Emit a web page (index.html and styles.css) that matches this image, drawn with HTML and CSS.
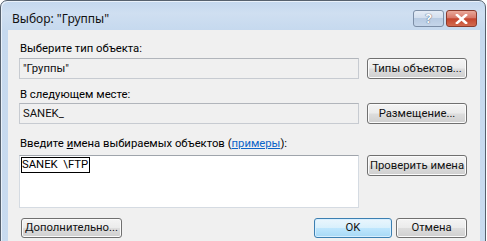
FILE: index.html
```html
<!DOCTYPE html>
<html lang="ru">
<head>
<meta charset="utf-8">
<title>Выбор: "Группы"</title>
<link rel="stylesheet" href="styles.css">
</head>
<body>
<div class="window">
  <div class="titlebar">
    <div class="title">Выбор: "Группы"</div>
    <div class="caption-buttons">
      <div class="cap-btn help">?</div>
      <div class="cap-btn close">
        <svg width="13" height="10" viewBox="0 0 13 10"><path d="M2 1 L11 9 M11 1 L2 9" stroke="#fff" stroke-width="2.6" stroke-linecap="square" fill="none"/></svg>
      </div>
    </div>
  </div>
  <div class="client">
    <div class="label l1">Выберите тип объекта:</div>
    <div class="row">
      <div class="field">"Группы"</div>
      <div class="btn">Типы объектов...</div>
    </div>
    <div class="label l2">В следующем месте:</div>
    <div class="row">
      <div class="field">SANEK_</div>
      <div class="btn">Размещение...</div>
    </div>
    <div class="label l3">Введите <u>и</u>мена выбираемых объектов (<span class="link">примеры</span>):</div>
    <div class="row top">
      <div class="textarea"><span class="entry">SANEK&nbsp;&nbsp;\FTP</span></div>
      <div class="btn">Проверить имена</div>
    </div>
    <div class="bottom">
      <div class="btn adv">Дополнительно...</div>
      <div class="spacer"></div>
      <div class="btn ok default">OK</div>
      <div class="btn cancel">Отмена</div>
    </div>
  </div>
</div>
</body>
</html>
```

FILE: styles.css
```css
html, body {
  margin: 0;
  padding: 0;
  background: #ffffff;
  overflow: hidden;
  width: 487px;
  height: 241px;
}

body {
  font-family: Roboto, "Noto Sans", sans-serif;
  font-size: 11.3px;
  color: #000;
}

.window {
  box-sizing: border-box;
  width: 486px;
  height: 270px;
  border: 1px solid #56616e;
  border-radius: 7px 7px 0 0;
  background: linear-gradient(180deg, #c3d7ee 0px, #cfdff1 12px, #c6d9ee 29px, #c9dbef 100%);
  padding: 0 5px 0 7px;
  display: flex;
  flex-direction: column;
  box-shadow: inset 1px 1px 0 #e9f1fa;
}

.titlebar {
  height: 29px;
  display: flex;
  align-items: flex-start;
  justify-content: space-between;
}

.title {
  padding: 10px 0 0 4px;
  font-family: "Noto Sans", sans-serif;
  font-size: 12px;
  line-height: 15px;
  color: #111;
}

.caption-buttons {
  display: flex;
  gap: 2px;
  padding-top: 9px;
  margin-right: 3px;
}

.cap-btn {
  box-sizing: border-box;
  width: 31px;
  height: 17px;
  border-radius: 3px;
  display: flex;
  align-items: center;
  justify-content: center;
}

.help {
  border: 1px solid #7c8ea6;
  background: linear-gradient(180deg, #e4ecf6 0%, #d3dfee 45%, #b8cbe2 50%, #c5d6ea 100%);
  color: #ffffff;
  font-family: "Noto Sans", sans-serif;
  font-weight: bold;
  font-size: 13px;
  line-height: 15px;
  text-shadow: 0 0 1px #4c5f7a, 0 0 1px #4c5f7a;
}

.close {
  width: 31px;
  border: 1px solid #8a3a2c;
  background: linear-gradient(180deg, #e9a99b 0%, #d8796a 45%, #c4452e 52%, #d26a4f 100%);
}

.client {
  flex: 1;
  background: #f0f0f0;
  padding: 11px 13px 0 11px;
  display: flex;
  flex-direction: column;
}

.label {
  line-height: 15px;
  padding-left: 1px;
  margin-bottom: 2px;
  white-space: nowrap;
}

.l2 { margin-top: 8px; margin-bottom: 1px; }
.l3 { margin-top: 12px; margin-bottom: 4px; }

.link {
  color: #0a64c8;
  text-decoration: underline;
}

.row {
  display: flex;
  gap: 8px;
  align-items: center;
}

.row.top { align-items: flex-start; }

.field {
  box-sizing: border-box;
  flex: 1;
  height: 21px;
  border: 1px solid #c7cbd1;
  border-top-color: #b1b5bb;
  background: #f0f0f0;
  padding: 0 3px;
  line-height: 19px;
  color: #111;
}

.textarea {
  box-sizing: border-box;
  flex: 1;
  height: 53px;
  border: 1px solid #d5dbe2;
  border-top-color: #9fa4ab;
  background: #ffffff;
  padding: 0 0 0 1px;
}

.entry {
  display: inline-block;
  border: 1px solid #000;
  line-height: 14px;
  padding: 0 1px 0 0;
  margin-top: 1px;
}

.btn {
  box-sizing: border-box;
  width: 100px;
  height: 21px;
  border: 1px solid #707070;
  border-radius: 3px;
  background: linear-gradient(180deg, #f4f4f4 0%, #ebebeb 48%, #dddddd 52%, #cfcfcf 100%);
  box-shadow: inset 0 0 0 1px #fbfbfb;
  text-align: center;
  line-height: 19px;
  color: #111;
  flex: none;
  white-space: nowrap;
}

.bottom {
  display: flex;
  margin-top: 10px;
  gap: 4px;
}

.adv {
  width: 101px;
  margin-left: 2px;
  height: 20px;
  line-height: 18px;
}

.spacer { flex: 1; }

.ok, .cancel {
  height: 20px;
  line-height: 18px;
}

.ok { width: 78px; }
.cancel { width: 71px; }

.default {
  border-color: #3c7fb1;
  background: linear-gradient(180deg, #eaf6fd 0%, #d9f0fc 48%, #bee6fd 52%, #a7d9f5 100%);
  box-shadow: inset 0 0 0 1px #d7efff;
}
```
